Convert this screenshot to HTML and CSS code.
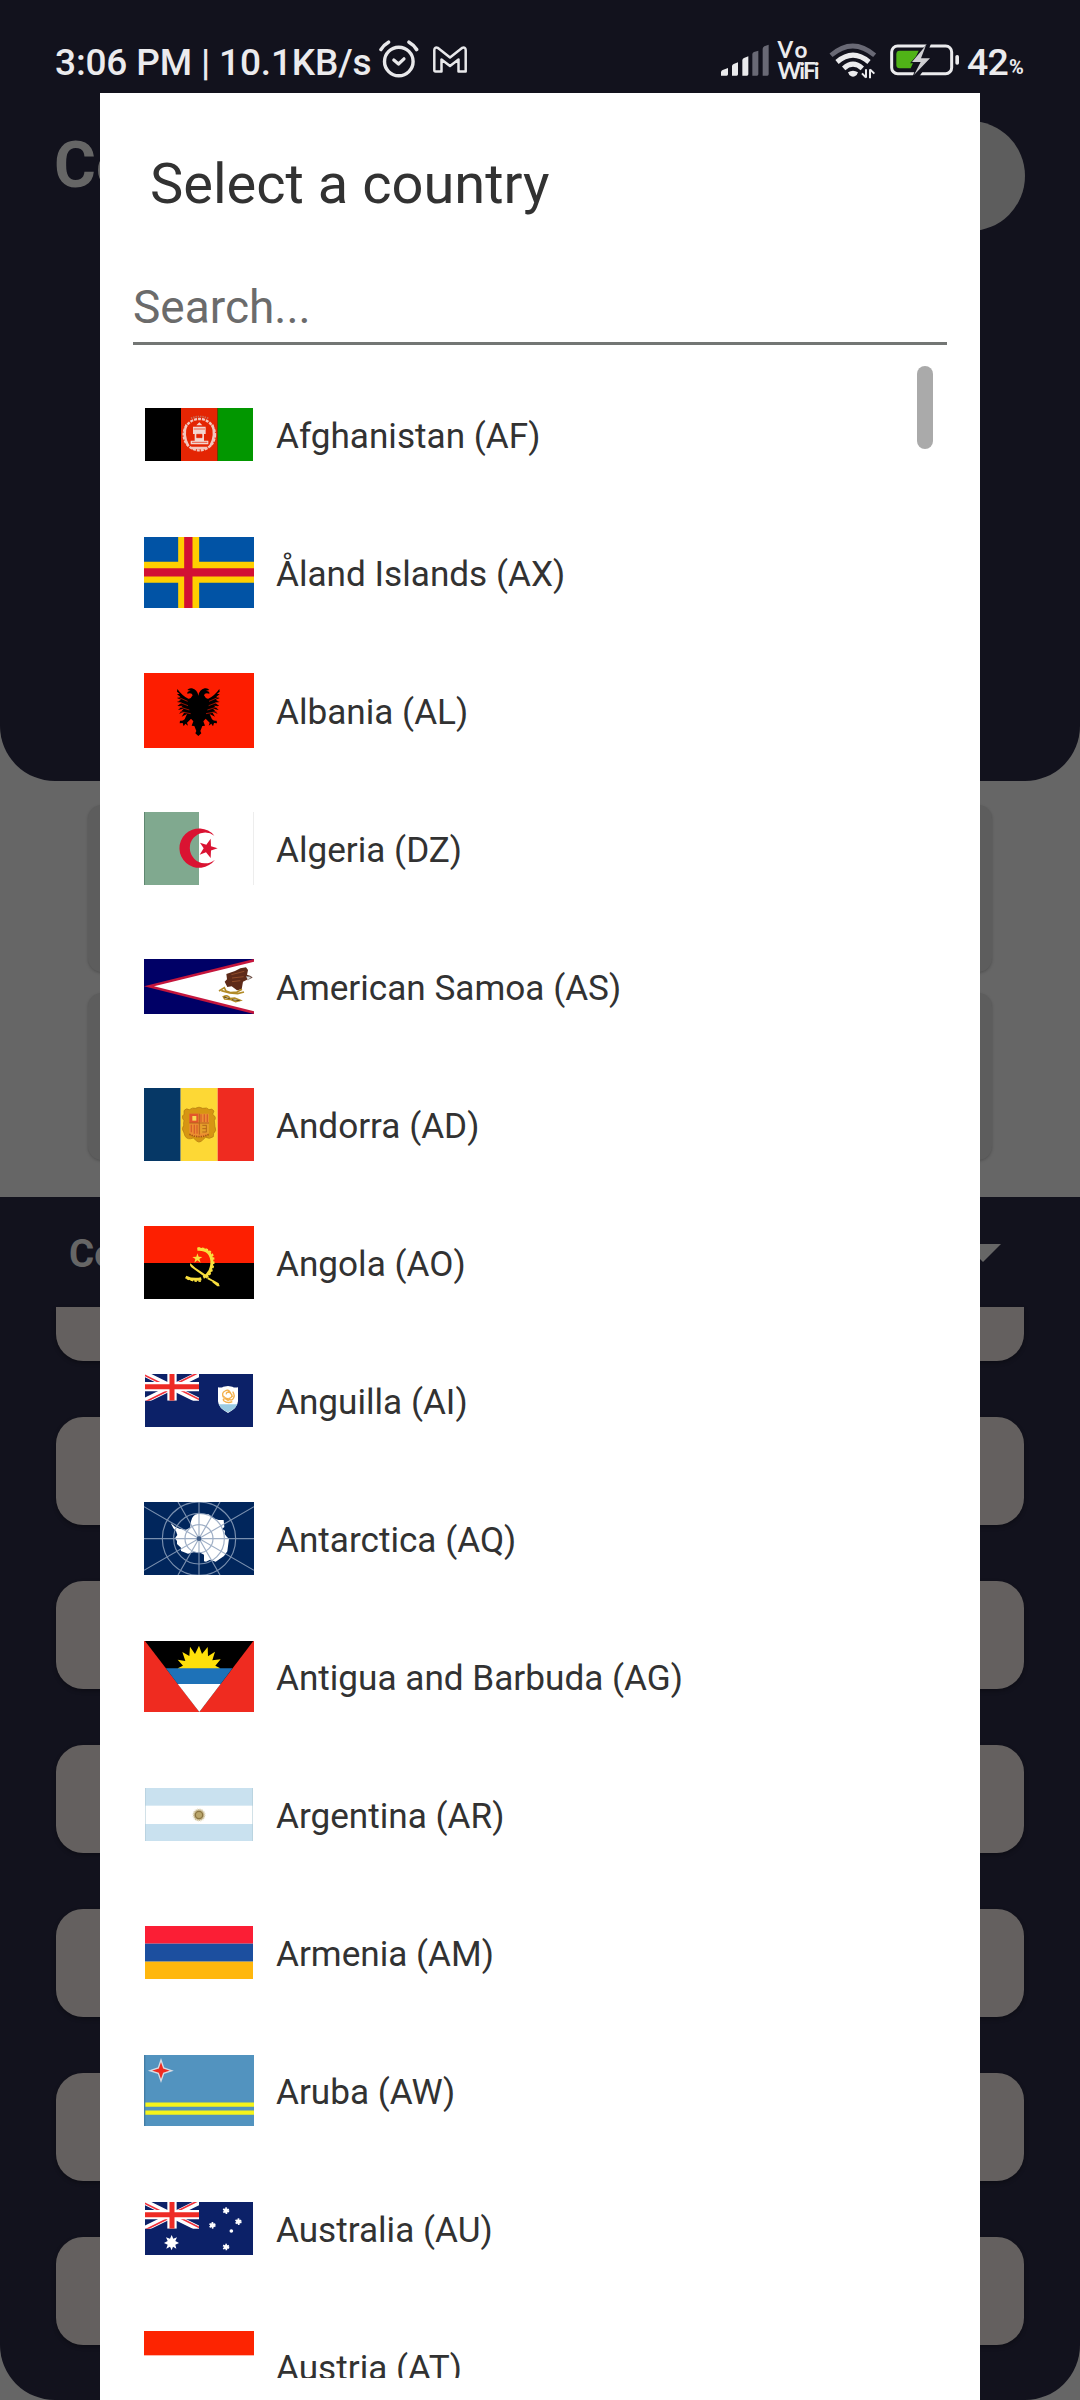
FILE: index.html
```html
<!DOCTYPE html>
<html lang="en">
<head>
<meta charset="utf-8">
<title>Select a country</title>
<link rel="stylesheet" href="styles.css">
</head>
<body>
<svg class="defs" width="0" height="0" aria-hidden="true">
  <defs>
    <symbol id="jack" viewBox="0 0 162 80" preserveAspectRatio="none">
      <rect width="162" height="80" fill="#0c2168"/>
      <path d="M0 0L162 80M162 0L0 80" stroke="#fff" stroke-width="17"/>
      <path d="M-2 3L78 43M160 -4L80 36M0 84L80 44M164 77L84 37" stroke="#f0303a" stroke-width="5"/>
      <path d="M81 0V80M0 38H162" stroke="#fff" stroke-width="28"/>
      <path d="M81 0V80M0 38H162" stroke="#ee2b25" stroke-width="15"/>
    </symbol>
  </defs>
</svg>
<div class="screen">
  <main class="page">
    <header class="hero">
      <h1 class="hero-title">Co</h1>
      <div class="avatar"></div>
    </header>
    <section class="cards">
      <div class="card"></div>
      <div class="card"></div>
    </section>
    <section class="panel">
      <div class="panel-head">
        <span>Co</span>
        <svg width="36" height="18" viewBox="0 0 36 18"><path d="M0 0H36L18 18Z" fill="#666"/></svg>
      </div>
      <div class="bars">
        <div class="bar bar-cut"></div>
        <div class="bar"></div>
        <div class="bar"></div>
        <div class="bar"></div>
        <div class="bar"></div>
        <div class="bar"></div>
        <div class="bar"></div>
      </div>
    </section>
  </main>

  <div class="status">
    <span class="clock">3:06 PM | 10.1KB/s</span>
    <svg class="alarm" width="40" height="40" viewBox="0 0 40 40" fill="none" stroke="#e8e8ea" stroke-linecap="round">
      <circle cx="19.8" cy="21.5" r="14.3" stroke-width="3.4"/>
      <path d="M2 9.500Q4.500 5 9.500 2.200M30 2.200Q35 5 37.600 9.500" stroke-width="3.600"/>
      <path d="M14.800 20L19.500 24L25 18.800" stroke-width="3.200" stroke-linejoin="round"/>
    </svg>
    <svg class="mail" width="34" height="28" viewBox="0 0 34 28" fill="none" stroke="#e8e8ea" stroke-width="2.500" stroke-linejoin="round">
      <path d="M1.300 24V4Q1.500 .5 5 2L17 11.500L29 2Q32.500 .5 32.700 4V25.500H25.500V13.500L17 20L8.500 13.500V25.500H2.500Q1.300 25.500 1.300 24Z"/>
    </svg>
    <div class="status-right">
      <svg width="48" height="60" viewBox="33 0 144 180" fill="#ebebed">
        <path d="M33 137V126Q34 122 38 120L54 114V133Q54 137 50 137ZM66 137V108Q67 104 71 102L84 97V133Q84 137 80 137ZM97 137V90Q98 86 102 84L115 79V133Q115 137 111 137Z"/>
        <path fill="#696975" d="M127 137V72Q128 68 132 66L145 62V133Q145 137 141 137ZM158 137V56Q159 51 163 49L176 44V133Q176 137 172 137Z"/>
      </svg>
      <svg class="vowifi" width="42" height="60" viewBox="0 0 42 60">
        <text x="-0.500" y="27.700" textLength="30">Vo</text>
        <text x="-0.500" y="49" textLength="42">WiFi</text>
      </svg>
      <svg class="wifi" width="48" height="60" viewBox="357 0 144 180" fill="none" stroke-width="14">
        <path d="M363 76Q428 20 494 76" stroke="#696975"/>
        <path d="M381 96Q429 55 477 96M401 115Q429 90 457 115" stroke="#ebebed" stroke-width="15"/>
        <path d="M414 127Q429 117 444 127L440 135Q429 145 418 135Z" fill="#ebebed"/>
        <path d="M468 118V143M468 143L456 130M480 145V118M480 118L493 131" stroke="#ebebed" stroke-width="6"/>
      </svg>
      <svg class="battery" width="70" height="60" viewBox="542 0 210 180">
        <rect x="547" y="48" width="180" height="83" rx="18" fill="none" stroke="#ebebed" stroke-width="9"/>
        <path d="M571 62H628L604 115H571Q561 115 561 105V72Q561 62 571 62Z" fill="#50b317"/>
        <path d="M656 38L602 100H625L609 142H628L668 85H648L666 38Z" fill="#12121d"/>
        <path d="M650 46L608 96H634L614 135L662 85H635Z" fill="#cfcfd2"/>
        <rect x="738" y="75" width="11" height="29" rx="5" fill="#ebebed"/>
      </svg>
      <span class="pct">42</span><span class="pct-sign">%</span>
    </div>
  </div>

  <div class="dialog" role="dialog">
    <h2 class="title">Select a country</h2>
    <div class="search">Search...</div>
    <div class="scrollbar"></div>
    <ul class="list">
      <li class="row"><span class="flag"><svg width="108" height="53" viewBox="0 0 324 159">
        <rect width="324" height="159" fill="#000"/><rect x="108" width="110" height="159" fill="#e42503"/><rect x="218" width="106" height="159" fill="#029700"/>
        <g fill="none" stroke="#f3c6bd"><circle cx="163" cy="80" r="47" stroke-width="7" stroke-dasharray="9 3"/><path d="M138 31Q163 20 190 31" stroke-width="5" stroke-dasharray="4 3" stroke="#c7705e"/><path d="M124 50Q112 83 130 114M202 50Q214 83 196 114M139 120H187" stroke-width="7"/></g>
        <path d="M144 56H182V78H177V98H190V109H137V98H149V78H144ZM154 52H172L163 43Z" fill="#f3d6d0"/><path d="M155 79H171V89H155ZM146 63H180M141 103H187" fill="#e42503" stroke="#e42503" stroke-width="2"/></svg></span><span class="name">Afghanistan (AF)</span></li>
      <li class="row"><span class="flag"><svg width="110" height="71" viewBox="0 0 330 213">
        <rect width="330" height="213" fill="#0153a5"/><path d="M134 0V213M0 106H330" stroke="#ffcf00" stroke-width="63"/><path d="M133 0V213M0 106H330" stroke="#d21034" stroke-width="25"/></svg></span><span class="name">Åland Islands (AX)</span></li>
      <li class="row"><span class="flag"><svg width="110" height="75" viewBox="0 0 330 225">
        <rect width="330" height="225" fill="#fd1d00"/>
        <path d="M163 68Q160 50 144 46Q135 44 130 51L140 53Q128 55 130 62Q144 58 146 67Q140 79 133 77Q116 70 100 48L99 56L107 62L99 64L109 71L99 75L111 80L99 87L113 89L100 99L116 98L102 111L119 107L105 122L122 116L113 131L129 123L122 139Q115 145 108 143L107 151L116 150L119 160L124 152L132 158L129 149L141 137L148 145L143 158L151 159L157 174L154 181L163 189L172 181L169 174L175 159L183 158L178 145L185 137L197 149L194 158L202 152L207 160L210 150L219 151L218 143Q211 145 204 139L197 123L213 131L204 116L221 122L207 107L224 111L210 98L226 99L213 89L227 87L215 80L227 75L217 71L227 64L219 62L227 56L226 48Q210 70 193 77Q186 79 180 67Q182 58 196 62Q198 55 186 53L196 51Q191 44 182 46Q166 50 163 68Z" fill="#000"/>
        <path d="M101 72L131 85M101 86L132 98M104 101L136 111M108 116L140 122M225 72L195 85M225 86L194 98M222 101L190 111M218 116L186 122" stroke="#b81500" stroke-width="2.500"/></svg></span><span class="name">Albania (AL)</span></li>
      <li class="row"><span class="flag"><svg width="110" height="73" viewBox="0 0 330 219">
        <rect width="165" height="219" fill="#80a98f"/><rect x="165" width="165" height="219" fill="#fff"/><rect x="328" width="2" height="219" fill="#e4e4e4"/><rect width="3" height="219" fill="#5f8770"/>
        <path d="M211 71A59 59 0 1 0 213 143A46 46 0 1 1 211 71Z" fill="#da1332"/>
        <path d="M221 109L201 115.500L200 138L186 121L167 128L179 109L168 92L187 98L200 80L201 103Z" fill="#da1332"/></svg></span><span class="name">Algeria (DZ)</span></li>
      <li class="row"><span class="flag"><svg width="110" height="55" viewBox="0 0 330 165">
        <rect width="330" height="165" fill="#000066"/><path d="M0 82L330 0V165Z" fill="#c5163d"/><path d="M30 82L330 8V157Z" fill="#fff"/>
        <path d="M247 45L273 36L289 28L306 25L312 33L309 47L320 51L326 56L309 62L297 68L293 91L279 94L263 82L250 84L242 68L249 61Z" fill="#5d2a19"/><path d="M262 47L301 37M264 57L299 53M264 68L289 65" stroke="#8f4b29" stroke-width="3"/><path d="M306 52L322 54L312 64" fill="#ddd" stroke="#888" stroke-width="2"/>
        <path d="M225 96L241 86L246 96L261 101L279 99L294 91M232 95L257 102L281 104L300 99M238 113Q252 106 258 119L272 117L289 124L275 128L258 121L242 120Z" fill="none" stroke="#b28b27" stroke-width="5"/><path d="M240 114L257 119M264 122L287 125" stroke="#5e4615" stroke-width="3"/></svg></span><span class="name">American Samoa (AS)</span></li>
      <li class="row"><span class="flag"><svg width="110" height="73" viewBox="0 0 330 219">
        <rect width="110" height="219" fill="#063866"/><rect x="110" width="111" height="219" fill="#fdd835"/><rect x="221" width="109" height="219" fill="#ef2b20"/>
        <path d="M120 68Q126 59 136 65Q147 57 154 61Q165 54 176 61Q190 57 195 65Q204 60 210 69L206 79Q219 88 211 98L213 116Q219 128 209 136L208 146Q196 155 185 148Q176 155 172 160Q164 165 158 159L148 150Q130 157 123 144L119 132Q111 123 119 112Q118 104 120 98Q110 86 120 79Z" fill="#d69513" stroke="#b0780f" stroke-width="2"/>
        <path d="M136 77H195V134Q191 145 166 148Q140 145 136 134Z" fill="#ed8f31"/><path d="M136 77H163V105H136Z" fill="#e3562b"/><path d="M145 84H157V98H145Z" fill="#f8dc55"/><path d="M171 79V102M181 79V102M190 79V102M142 110V133M151 110V137M159 110V137" stroke="#d8622a" stroke-width="4"/><path d="M169 107H194V136H169Z" fill="#e4a02a"/><path d="M175 112H188M175 122H188M175 132H188M187 112V132M136 105H195M166 77V140" stroke="#b5651c" stroke-width="3"/><path d="M136 139Q166 153 195 139" fill="none" stroke="#a65415" stroke-width="5" stroke-dasharray="4 3"/></svg></span><span class="name">Andorra (AD)</span></li>
      <li class="row"><span class="flag"><svg width="110" height="73" viewBox="0 0 330 219">
        <rect width="330" height="219" fill="#000"/><rect width="330" height="111" fill="#fd1f01"/>
        <path d="M160 70Q201 67 204 107Q203 142 178 154M172 158Q147 164 125 153" fill="none" stroke="#f9df3e" stroke-width="9"/><path d="M161 66Q212 66 209 110Q207 140 185 157M171 165Q144 167 126 156" fill="none" stroke="#f9df3e" stroke-width="5" stroke-dasharray="7 5"/>
        <path d="M139 112Q136 118 142 124L190 158L195 153L154 125ZM190 152L210 164L207 168L188 158ZM207 162L224 172L227 181H220L205 169Z" fill="#f9df3e"/><path d="M160 82L164 92L175 93L166 99L170 110L160 103L151 110L154 99L145 93L157 92Z" fill="#f9df3e"/></svg></span><span class="name">Angola (AO)</span></li>
      <li class="row"><span class="flag"><svg width="108" height="53" viewBox="0 0 324 159">
        <rect width="324" height="159" fill="#0c2168"/><use href="#jack" width="162" height="80"/>
        <path d="M219 40Q230 42 235 38L249 36L262 38Q268 42 279 40V82Q278 102 249 117Q220 102 219 82Z" fill="#fff"/><path d="M221 91H277Q270 106 249 115Q228 106 221 91Z" fill="#9acbe3"/>
        <path d="M236 71Q228 57 240 51Q250 45 255 54Q243 53 244 61M263 53Q272 65 263 76Q255 81 253 73Q263 71 260 60M262 83Q248 89 236 80Q232 74 241 74Q248 82 256 76M249 53Q261 58 262 69M235 66Q240 74 251 75" fill="none" stroke="#f4b04b" stroke-width="4"/></svg></span><span class="name">Anguilla (AI)</span></li>
      <li class="row"><span class="flag"><svg width="110" height="73" viewBox="0 0 330 219">
        <rect width="330" height="219" fill="#01265c"/>
        <path d="M80 63L93 74L106 80L126 83L138 77L141 58Q144 38 163 35L194 37L208 49L224 54L239 54L241 75L234 81L243 86L242 96L249 105L255 110L250 148L240 162L215 179L198 173L186 179L180 178V158L166 151L159 152L153 149L132 155L111 147V137L99 126V117L93 109L100 99L96 87L88 79Z" fill="#fff"/>
        <g fill="none" stroke="#8fa2bd" stroke-width="3.500" opacity=".85"><circle cx="165" cy="110" r="110"/><circle cx="165" cy="110" r="76"/><circle cx="165" cy="110" r="42"/><path d="M0 110H330M165 0V219M0 14L330 205M0 205L330 14M102 0L228 219M228 0L102 219"/></g><circle cx="165" cy="110" r="7" fill="#3f5c86"/></svg></span><span class="name">Antarctica (AQ)</span></li>
      <li class="row"><span class="flag"><svg width="110" height="71" viewBox="0 0 330 213">
        <rect width="330" height="213" fill="#ef2b20"/><path d="M3 0H328L166 213Z" fill="#000"/>
        <path d="M101 82L117 74L101 56L124 60L115 33L136 45L138 17L153 39L165 14L174 39L191 18L192 46L213 32L205 58L230 55L214 74L229 82L215 90H112Z" fill="#ffe00a"/>
        <path d="M65.500 82H265.600L229.900 129H101.200Z" fill="#1e72b8"/><path d="M101.200 129H229.900L166 213Z" fill="#fff"/></svg></span><span class="name">Antigua and Barbuda (AG)</span></li>
      <li class="row"><span class="flag"><svg width="108" height="53" viewBox="0 0 324 159">
        <rect width="324" height="159" fill="#c9e1ef"/><rect y="53" width="324" height="55" fill="#fff"/><path d="M1 0V159M323 0V159" stroke="#aec8d5" stroke-width="2"/><circle cx="162" cy="81" r="18" fill="#c9bb93"/><circle cx="162" cy="81" r="18" fill="none" stroke="#eee8d8" stroke-width="5" stroke-dasharray="3 4"/><circle cx="162" cy="81" r="11" fill="#baa66b" stroke="#8d7642" stroke-width="4"/></svg></span><span class="name">Argentina (AR)</span></li>
      <li class="row"><span class="flag"><svg width="108" height="53" viewBox="0 0 324 159">
        <rect width="324" height="53" fill="#fb1e35"/><rect y="53" width="324" height="54" fill="#1c4f9f"/><rect y="107" width="324" height="52" fill="#ffb70d"/></svg></span><span class="name">Armenia (AM)</span></li>
      <li class="row"><span class="flag"><svg width="110" height="71" viewBox="0 0 330 213">
        <rect width="330" height="213" fill="#5293bf"/><path d="M0 149H330M0 173H330" stroke="#f5f41c" stroke-width="13"/><path d="M2 0V213" stroke="#437da5" stroke-width="4"/>
        <path d="M51 15L59 39L83 47L59 55L51 78L43 55L18 47L43 39Z" fill="#ef2b20" stroke="#d7dbe4" stroke-width="4"/></svg></span><span class="name">Aruba (AW)</span></li>
      <li class="row"><span class="flag"><svg width="108" height="53" viewBox="0 0 324 159">
        <rect width="324" height="159" fill="#0c2168"/><use href="#jack" width="162" height="80"/>
        <path d="M80 99L85 110L96 106L91 117L102 123L91 128L94 140L84 134L80 145L75 134L64 140L68 128L57 123L68 117L63 106L75 110Z" fill="#fff"/>
        <g fill="#fff" stroke="#fff" stroke-width="6" stroke-dasharray="4 3"><circle cx="243" cy="26" r="7"/><circle cx="280" cy="59" r="7"/><circle cx="202" cy="70" r="7"/><circle cx="243" cy="135" r="7"/></g><circle cx="259" cy="87" r="5.500" fill="#fff"/></svg></span><span class="name">Australia (AU)</span></li>
      <li class="row"><span class="flag"><svg width="110" height="71" viewBox="0 0 330 213">
        <rect width="330" height="213" fill="#fff"/><rect width="330" height="73" fill="#fd2401"/><rect y="143" width="330" height="70" fill="#fd2401"/></svg></span><span class="name">Austria (AT)</span></li>
    </ul>
  </div>
</div>
</body>
</html>
```
FILE: styles.css
```css
* { box-sizing: border-box; }
body { margin: 0; font-family: Roboto, "Noto Sans", sans-serif; }
svg { display: block; flex: none; }
.defs { position: absolute; }
.screen { position: relative; width: 1080px; height: 2400px; overflow: hidden; background: #666; }

/* dimmed page behind the dialog */
.page { display: flex; flex-direction: column; height: 2400px; }
.hero { display: flex; justify-content: space-between; height: 781px; padding: 121px 55px 0 54px; background: #12121d; border-radius: 0 0 55px 55px; }
.hero-title { margin: 6px 0 0; font-size: 64px; line-height: 78px; font-weight: 700; color: #666; }
.avatar { width: 110px; height: 110px; border-radius: 50%; background: #5d5d5d; }
.cards { display: flex; flex-direction: column; gap: 21px; height: 416px; padding: 24px 88px 0; }
.card { height: 167px; border-radius: 14px; background: #5d5d5d; box-shadow: 0 1px 3px rgba(0, 0, 0, .22); }
.panel { flex: 1; background: #12121d; border-radius: 0 0 55px 55px; }
.panel-head { display: flex; justify-content: space-between; align-items: center; height: 110px; padding: 2px 79px 0 69px; font-size: 38.5px; font-weight: 700; color: #666; }
.bars { display: flex; flex-direction: column; gap: 56px; padding: 0 56px; }
.bar { height: 108px; border-radius: 27px; background: #64605f; box-shadow: 0 2px 4px rgba(0, 0, 0, .3); }
.bar-cut { height: 54px; border-radius: 0 0 27px 27px; }

/* system status bar */
.status { position: absolute; left: 0; top: 30px; width: 1080px; height: 60px; display: flex; color: #ebebed; font-weight: 500; }
.clock { width: 324px; margin-left: 55px; font-size: 37px; line-height: 65px; letter-spacing: -.15px; white-space: nowrap; }
.alarm { margin-top: 9.5px; }
.mail { margin: 16px 0 0 14px; }
.status-right { display: flex; margin-left: 254px; }
.vowifi { margin-left: 9px; overflow: visible; fill: #ebebed; font: 700 22.5px Lato, sans-serif; }
.wifi { margin-left: 9px; }
.battery { margin-left: 13px; }
.pct { margin-left: 7px; font-size: 37.5px; line-height: 64px; width: 42px; letter-spacing: -.7px; }
.pct-sign { font-size: 20px; line-height: 75px; font-weight: 700; }

/* country picker */
.dialog { position: absolute; left: 100px; top: 93px; width: 880px; height: 2307px; background: #fff; color: #323232; }
.title { margin: 0; padding: 58px 0 0 50px; height: 160px; font-size: 56px; line-height: 66px; font-weight: 400; }
.search { height: 92px; margin: 0 33px; padding-top: 27px; border-bottom: 3px solid #737674; font-size: 46px; line-height: 54px; color: #6b6b6b; }
.scrollbar { position: absolute; left: 817px; top: 273px; width: 16px; height: 83px; border-radius: 8px; background: #aaa; }
.list { list-style: none; margin: 20.5px 0 0; padding: 0; height: 2012.5px; overflow: hidden; }
.row { display: flex; align-items: center; height: 138px; padding-left: 44px; font-size: 35.15px; line-height: 44px; }
.flag { display: flex; justify-content: center; width: 110px; margin-right: 22px; }
.name { padding-top: 3px; }
```
